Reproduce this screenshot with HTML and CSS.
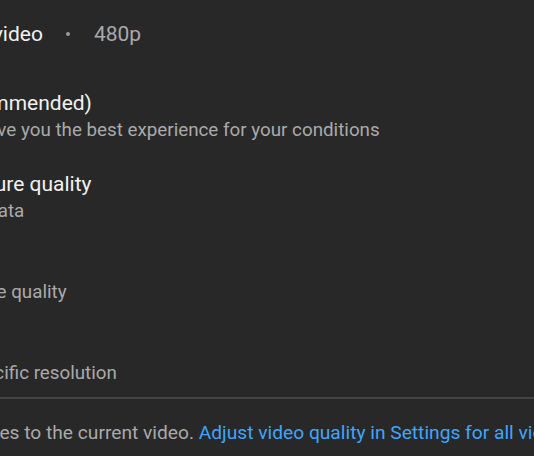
FILE: index.html
```html
<!DOCTYPE html>
<html lang="en">
<head>
    <meta charset="UTF-8">
    <meta name="viewport" content="width=device-width, initial-scale=1.0">
    <title>Quality for current video</title>
    <link rel="stylesheet" href="styles.css">
</head>
<body>
    <div class="sheet">
        <div class="sheet-header">
            <span class="sheet-title">Quality for current video</span>
            <span class="dot"></span>
            <span class="current">480p</span>
        </div>

        <div class="options">
            <div class="option">
                <div class="option-title">Auto (recommended)</div>
                <div class="option-desc">Adjusts to give you the best experience for your conditions</div>
            </div>
            <div class="option">
                <div class="option-title">Higher picture quality</div>
                <div class="option-desc">Uses more data</div>
            </div>
            <div class="option">
                <div class="option-title">Data saver</div>
                <div class="option-desc">Lower picture quality</div>
            </div>
            <div class="option">
                <div class="option-title">Advanced</div>
                <div class="option-desc">Select a specific resolution</div>
            </div>
        </div>

        <div class="note">
            Applies to the current video. <a href="#" class="link">Adjust video quality in Settings for all videos</a>
        </div>
    </div>
</body>
</html>
```

FILE: styles.css
```css
html, body {
    margin: 0;
    padding: 0;
    background-color: #282828;
    overflow: hidden;
}
body {
    font-family: Roboto, "Noto Sans", Arial, sans-serif;
    width: 534px;
    height: 456px;
}
/* bottom sheet is wider than the viewport, left side scrolled out */
.sheet {
    margin-left: -180px;
    width: 900px;
    white-space: nowrap;
}
.sheet-header {
    display: flex;
    align-items: center;
    padding: 21px 0 29px;
    font-size: 21px;
    line-height: 26px;
    color: #f1f1f1;
}
.dot {
    width: 4px;
    height: 4px;
    border-radius: 50%;
    background-color: #9a9a9a;
    margin: 0 24px 0 23px;
}
.current {
    color: #aaaaaa;
}
.options {
    padding-left: 73px;
}
.option {
    padding: 14px 0 13px;
}
.option-title {
    font-size: 21px;
    line-height: 26px;
    color: #f1f1f1;
}
.option-desc {
    font-size: 18.8px;
    line-height: 28px;
    color: #aaaaaa;
}
.note {
    border-top: 2px solid #444444;
    margin-top: -3px;
    padding: 20px 0 0 136px;
    font-size: 19.2px;
    line-height: 28px;
    color: #aaaaaa;
}
.link {
    color: #3ea6ff;
    text-decoration: none;
}
```
